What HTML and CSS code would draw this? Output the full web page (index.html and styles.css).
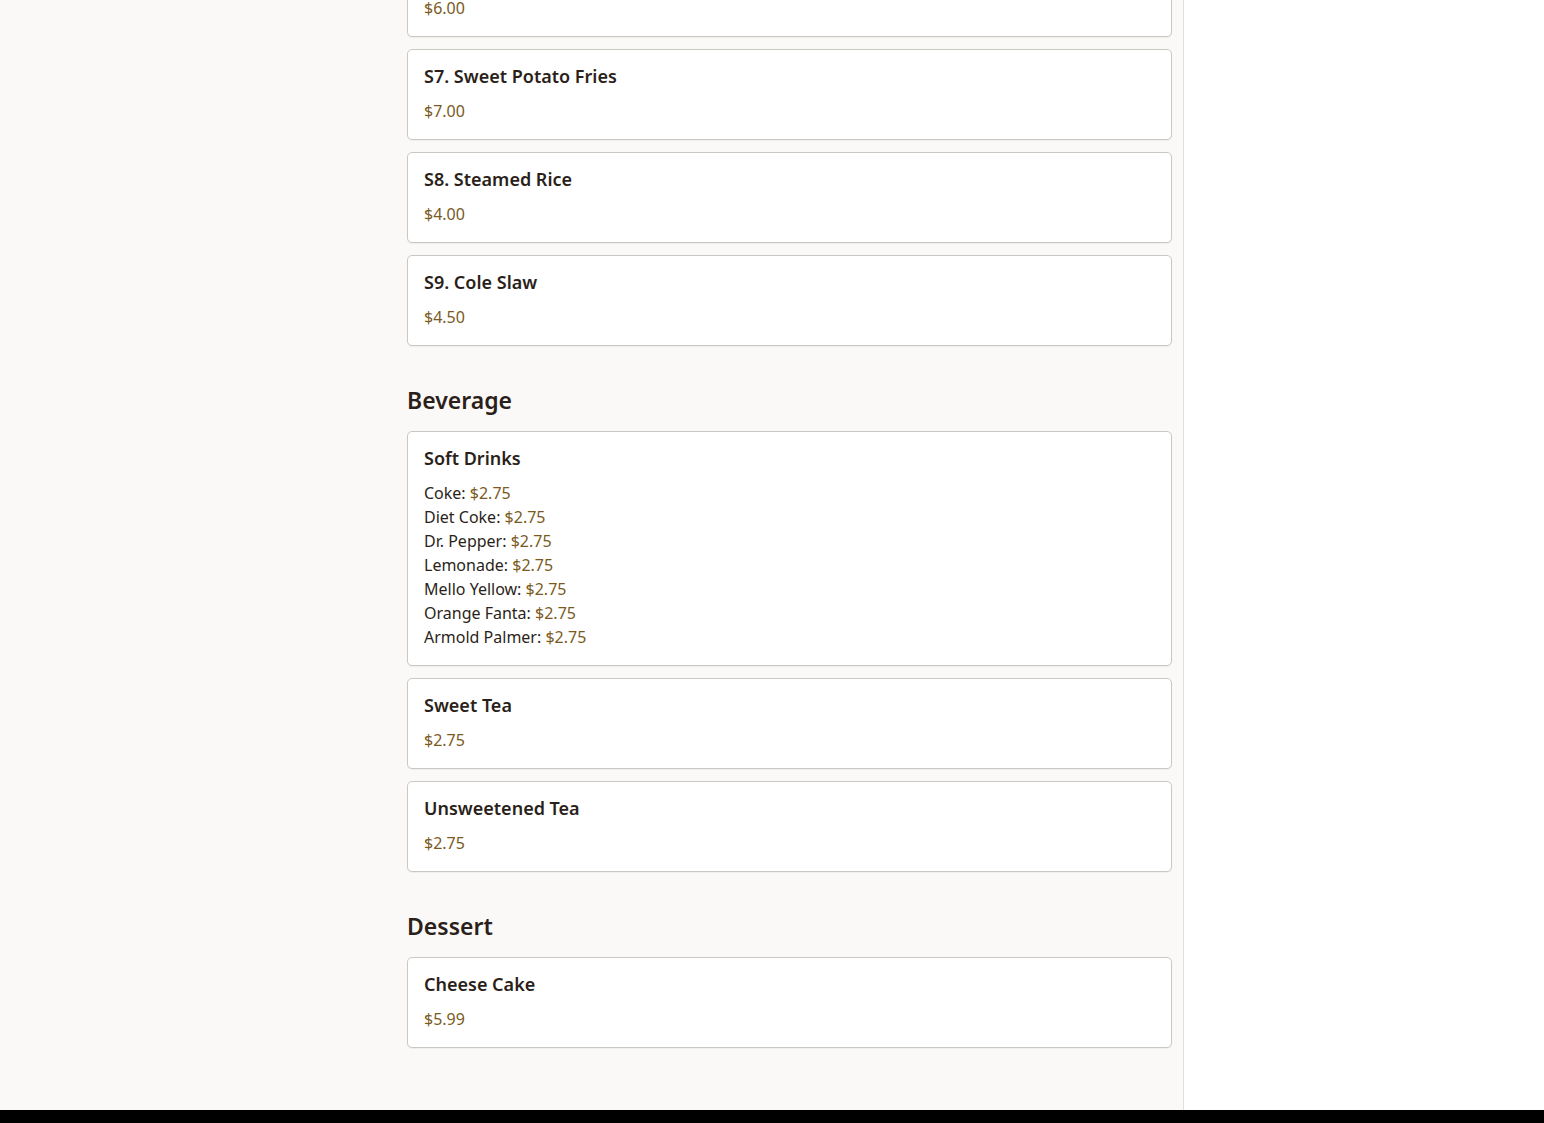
FILE: index.html
```html
<!DOCTYPE html>
<html lang="en">
<head>
<meta charset="utf-8">
<title>Menu</title>
<link rel="stylesheet" href="styles.css">
</head>
<body>
<div class="page">
  <main class="main">
    <div class="menu">
      <section class="section section-first">
        <div class="card">
          <h3 class="item-name">S6. Onion Rings</h3>
          <p class="price">$6.00</p>
        </div>
        <div class="card">
          <h3 class="item-name">S7. Sweet Potato Fries</h3>
          <p class="price">$7.00</p>
        </div>
        <div class="card">
          <h3 class="item-name">S8. Steamed Rice</h3>
          <p class="price">$4.00</p>
        </div>
        <div class="card">
          <h3 class="item-name">S9. Cole Slaw</h3>
          <p class="price">$4.50</p>
        </div>
      </section>
      <section class="section">
        <h2 class="section-title">Beverage</h2>
        <div class="card">
          <h3 class="item-name">Soft Drinks</h3>
          <ul class="options">
            <li>Coke: <span class="price-inline">$2.75</span></li>
            <li>Diet Coke: <span class="price-inline">$2.75</span></li>
            <li>Dr. Pepper: <span class="price-inline">$2.75</span></li>
            <li>Lemonade: <span class="price-inline">$2.75</span></li>
            <li>Mello Yellow: <span class="price-inline">$2.75</span></li>
            <li>Orange Fanta: <span class="price-inline">$2.75</span></li>
            <li>Armold Palmer: <span class="price-inline">$2.75</span></li>
          </ul>
        </div>
        <div class="card">
          <h3 class="item-name">Sweet Tea</h3>
          <p class="price">$2.75</p>
        </div>
        <div class="card">
          <h3 class="item-name">Unsweetened Tea</h3>
          <p class="price">$2.75</p>
        </div>
      </section>
      <section class="section">
        <h2 class="section-title">Dessert</h2>
        <div class="card">
          <h3 class="item-name">Cheese Cake</h3>
          <p class="price">$5.99</p>
        </div>
      </section>
    </div>
  </main>
  <aside class="sidebar"></aside>
</div>
<footer class="footer"></footer>
</body>
</html>
```

FILE: styles.css
```css
* { box-sizing: border-box; }
html, body { margin: 0; padding: 0; }
body {
  font-family: "Noto Sans", "Open Sans", sans-serif;
  color: #2b1f1a;
  background: #ffffff;
  overflow: hidden;
}
.page {
  display: flex;
  height: 1110px;
  overflow: hidden;
}
.main {
  flex: 1;
  background: #faf9f7;
  border-right: 1px solid #e2dfdb;
  display: flex;
  justify-content: flex-end;
  align-items: flex-end;
  padding: 0 11px 62px 0;
}
.sidebar {
  width: 360px;
  background: #ffffff;
}
.menu {
  width: 765px;
  display: flex;
  flex-direction: column;
}
.section {
  display: flex;
  flex-direction: column;
  gap: 12px;
  margin-top: 40px;
}
.section-first { margin-top: 0; }
.section-title {
  font-size: 23px;
  font-weight: 600;
  line-height: 28px;
  margin: 0 0 5px;
  color: #2b1f1a;
}
.card {
  background: #ffffff;
  border: 1px solid #cbc8c4;
  border-radius: 5px;
  padding: 16px;
  box-shadow: 0 1px 1px rgba(0, 0, 0, 0.05);
}
.item-name {
  margin: 0 0 12px;
  font-size: 18px;
  font-weight: 600;
  line-height: 21px;
  color: #2b1f1a;
}
.price {
  margin: 0;
  font-size: 16px;
  line-height: 24px;
  color: #7a5a22;
}
.options {
  list-style: none;
  margin: 0;
  padding: 0;
  font-size: 16px;
  line-height: 24px;
  color: #2b1f1a;
}
.price-inline { color: #7a5a22; }
.footer {
  height: 13px;
  background: #000000;
}
```
